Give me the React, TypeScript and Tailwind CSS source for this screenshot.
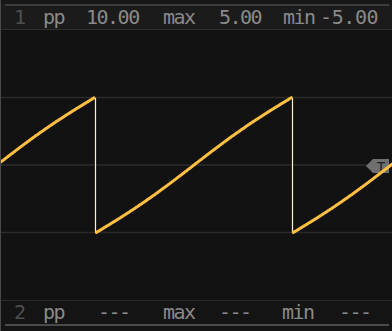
const mono = { fontFamily: '"DejaVu Sans Mono", "Liberation Mono", monospace' };

type Cell = { text: string; w: number; dim?: boolean; wide?: boolean };

const topCells: Cell[] = [
  { text: "1", w: 29, dim: true },
  { text: "pp", w: 43 },
  { text: "10.00", w: 77 },
  { text: "max", w: 56 },
  { text: "5.00", w: 64 },
  { text: "min", w: 37 },
  { text: "-5.00", w: 70, wide: true },
];

const bottomCells: Cell[] = [
  { text: "2", w: 29, dim: true },
  { text: "pp", w: 55 },
  { text: "---", w: 65 },
  { text: "max", w: 56 },
  { text: "---", w: 63 },
  { text: "min", w: 57 },
  { text: "---", w: 40 },
];

const ReadoutRow = ({ cells }: { cells: Cell[] }) => (
  <div
    className="flex h-[23px] items-center pl-[13px] text-[20px] leading-[23px] tracking-[-1.5px] whitespace-pre"
    style={mono}
  >
    {cells.map((c, i) => (
      <span
        key={i}
        className={`shrink-0 ${c.dim ? "text-[#4e4e4e]" : "text-[#8a8a8a]"} ${c.wide ? "tracking-[-0.4px]" : ""}`}
        style={{ width: c.w }}
      >
        {c.text}
      </span>
    ))}
  </div>
);

// sawtooth, slightly softened near the corners
const PERIOD = 197;
const DROP = 94.5;
const TOP = 67;
const BOT = 203;

const ramp = (x: number) => {
  let t = (x - DROP) / PERIOD;
  t = t - Math.floor(t);
  const v = t - (0.12 * Math.sin(2 * Math.PI * t)) / (2 * Math.PI);
  return BOT - (BOT - TOP) * v;
};

const buildRamps = () => {
  const drops = [DROP, DROP + PERIOD];
  const edges = [0, ...drops, 392];
  const paths: string[] = [];
  for (let i = 0; i < edges.length - 1; i++) {
    const a = i === 0 ? edges[i] : edges[i] + 0.8;
    const b = i === edges.length - 2 ? edges[i + 1] : edges[i + 1] - 0.8;
    const pts: string[] = [];
    for (let x = a; x <= b + 0.001; x += 1) {
      const xx = Math.min(x, b);
      pts.push(`${xx.toFixed(1)},${ramp(xx).toFixed(1)}`);
    }
    paths.push("M" + pts.join(" L"));
  }
  return { paths, drops };
};

const Scope = () => {
  const { paths, drops } = buildRamps();
  return (
    <svg className="absolute inset-0 h-full w-full" viewBox="0 0 391 268">
      <line x1="0" y1="67.5" x2="391" y2="67.5" stroke="#2a2a2a" strokeWidth="1.5" />
      <line x1="0" y1="135" x2="391" y2="135" stroke="#2c2c2c" strokeWidth="1.5" />
      <line x1="0" y1="202.5" x2="391" y2="202.5" stroke="#2a2a2a" strokeWidth="1.5" />
      <polygon points="365,136 372,129 388,129 388,143 372,143" fill="#6f6f6f" />
      <text x="380" y="141.5" textAnchor="middle" fontSize="14" fill="#1e1e1e" style={mono}>
        T
      </text>
      {drops.map((d) => (
        <line key={d} x1={d} y1={TOP + 1} x2={d} y2={BOT - 1} stroke="#fff0cc" strokeWidth="1.2" />
      ))}
      {paths.map((p, i) => (
        <path
          key={i}
          d={p}
          fill="none"
          stroke="#ffbf40"
          strokeWidth="3"
          strokeLinecap="round"
          strokeLinejoin="round"
        />
      ))}
    </svg>
  );
};

export default function App() {
  return (
    <div className="flex h-[331px] w-[392px] flex-col overflow-hidden border-l border-[#4a4a4a] bg-[#121212]">
      <div className="flex h-[30px] shrink-0 flex-col bg-[#1b1b1b]">
        <div className="h-[4px] bg-[#171717]" />
        <div className="mr-[3px] ml-[4px] h-[2px] bg-[#3c3c3c]" />
        <ReadoutRow cells={topCells} />
        <div className="h-[1px] bg-[#2d2d2d]" />
      </div>
      <div className="relative flex-1">
        <Scope />
      </div>
      <div className="flex h-[33px] shrink-0 flex-col bg-[#141414]">
        <div className="h-[2px]" />
        <div className="h-[1px] bg-[#2a2a2a]" />
        <ReadoutRow cells={bottomCells} />
        <div className="mr-[3px] ml-[4px] h-[2px] bg-[#4b4b4b]" />
        <div className="h-[5px]" />
      </div>
    </div>
  );
}
